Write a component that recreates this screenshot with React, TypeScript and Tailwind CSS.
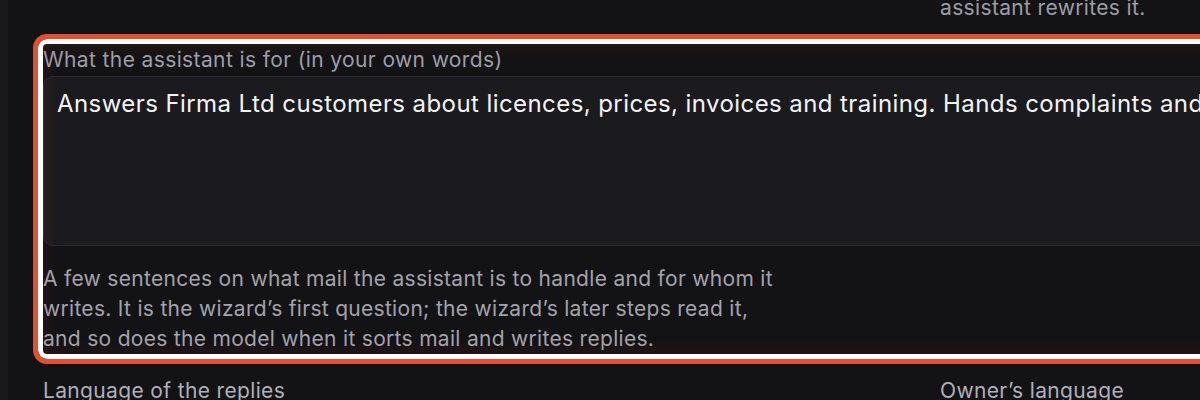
export default function App() {
  return (
    <div
      className="flex h-[400px] w-[1200px] overflow-hidden bg-[#131316] text-[#a1a1aa]"
      style={{ fontFamily: "Inter, 'Noto Sans', sans-serif" }}
    >
      {/* sidebar edge */}
      <div className="w-2 shrink-0 bg-[#19191c]" />

      <div className="flex flex-1 flex-col pl-[35px]">
        {/* end of previous row */}
        <div className="-mt-[8px] grid grid-cols-[897px_1fr] text-[21px] leading-[31.5px] tracking-[0.35px]">
          <div />
          <p className="whitespace-nowrap text-[#9d9da5]">assistant rewrites it.</p>
        </div>

        {/* highlighted field */}
        <div className="relative mt-[20.5px] w-[1260px] shrink-0">
          <label className="block h-[32px] text-[21px] leading-[31.5px] tracking-[0.38px] text-[#9e9ea6]">
            What the assistant is for (in your own words)
          </label>
          <div className="h-[170px] rounded-[10px] border border-[#2b2b30] bg-[#1b1b1f] px-[13px] py-[9px]">
            <p className="whitespace-nowrap text-[24px] leading-[36px] tracking-[0.42px] text-[#f4f4f5]">
              Answers Firma Ltd customers about licences, prices, invoices and training. Hands complaints and refunds to a person.
            </p>
          </div>
          <p className="mt-[18px] text-[21px] leading-[30px] tracking-[0.3px] text-[#a3a3ab]">
            A few sentences on what mail the assistant is to handle and for whom it
            <br />
            writes. It is the wizard’s first question; the wizard’s later steps read it,
            <br />
            and so does the model when it sorts mail and writes replies.
          </p>

          <div className="pointer-events-none absolute -inset-[10px] rounded-[14px] border-[5px] border-[#e4502e] shadow-[inset_0_0_0_5px_#ffffff,inset_0_0_16px_6px_rgba(190,60,35,0.16)]" />
        </div>

        {/* next row */}
        <div className="mt-[21px] grid grid-cols-[897px_1fr] text-[21px] leading-[31.5px] tracking-[0.35px] text-[#b0b0b7]">
          <span className="whitespace-nowrap">Language of the replies</span>
          <span className="whitespace-nowrap">Owner’s language</span>
        </div>
      </div>
    </div>
  );
}
